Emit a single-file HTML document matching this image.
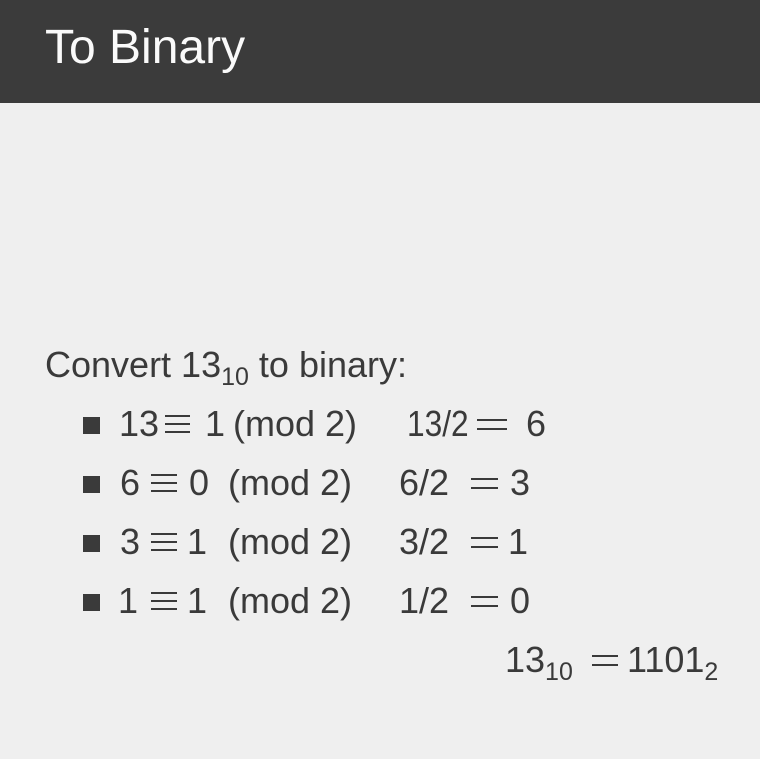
<!DOCTYPE html>
<html><head><meta charset="utf-8"><style>
body{margin:0;width:760px;height:759px;background:#efefef;position:relative;overflow:hidden;font-family:"Liberation Sans","DejaVu Sans",sans-serif;color:#3a3a3a}
.hd{position:absolute;left:0;top:0;width:760px;height:103px;background:#3b3b3b}
.t{position:absolute;left:45px;top:24px;font-size:48px;line-height:48px;color:#fafafa;white-space:nowrap}
.s{position:absolute;font-size:36px;line-height:36px;white-space:nowrap}
.l{position:absolute;height:2px;background:#3a3a3a}
sub{font-size:25px;vertical-align:-8px;line-height:0}
.b{position:absolute;left:83px;width:17px;height:17px;background:#3a3a3a}
</style></head><body>
<div class="hd"></div><div class="t">To Binary</div>
<div class="s" style="left:45px;top:347px">Convert 13<sub>10</sub> to binary:</div>

<div class="b" style="top:417px"></div>
<div class="s" style="left:119px;top:406px">13</div>
<div class="l" style="left:165px;width:25px;top:415px"></div>
<div class="l" style="left:165px;width:25px;top:423px"></div>
<div class="l" style="left:165px;width:25px;top:431px"></div>
<div class="s" style="left:205px;top:406px">1</div>
<div class="s" style="left:233px;top:406px">(mod 2)</div>
<div class="s" style="left:407px;top:406px;transform:scaleX(0.88);transform-origin:left center">13/2</div>
<div class="l" style="left:477px;width:30px;top:419px"></div>
<div class="l" style="left:477px;width:30px;top:428px"></div>
<div class="s" style="left:526px;top:406px">6</div>

<div class="b" style="top:476px"></div>
<div class="s" style="left:120px;top:465px">6</div>
<div class="l" style="left:151px;width:26px;top:474px"></div>
<div class="l" style="left:151px;width:26px;top:482px"></div>
<div class="l" style="left:151px;width:26px;top:490px"></div>
<div class="s" style="left:189px;top:465px">0</div>
<div class="s" style="left:228px;top:465px">(mod 2)</div>
<div class="s" style="left:399px;top:465px">6/2</div>
<div class="l" style="left:471px;width:27px;top:478px"></div>
<div class="l" style="left:471px;width:27px;top:487px"></div>
<div class="s" style="left:510px;top:465px">3</div>

<div class="b" style="top:535px"></div>
<div class="s" style="left:120px;top:524px">3</div>
<div class="l" style="left:151px;width:26px;top:533px"></div>
<div class="l" style="left:151px;width:26px;top:541px"></div>
<div class="l" style="left:151px;width:26px;top:549px"></div>
<div class="s" style="left:187px;top:524px">1</div>
<div class="s" style="left:228px;top:524px">(mod 2)</div>
<div class="s" style="left:399px;top:524px">3/2</div>
<div class="l" style="left:471px;width:27px;top:537px"></div>
<div class="l" style="left:471px;width:27px;top:546px"></div>
<div class="s" style="left:508px;top:524px">1</div>

<div class="b" style="top:594px"></div>
<div class="s" style="left:118px;top:583px">1</div>
<div class="l" style="left:151px;width:26px;top:592px"></div>
<div class="l" style="left:151px;width:26px;top:600px"></div>
<div class="l" style="left:151px;width:26px;top:608px"></div>
<div class="s" style="left:187px;top:583px">1</div>
<div class="s" style="left:228px;top:583px">(mod 2)</div>
<div class="s" style="left:399px;top:583px">1/2</div>
<div class="l" style="left:471px;width:27px;top:596px"></div>
<div class="l" style="left:471px;width:27px;top:605px"></div>
<div class="s" style="left:510px;top:583px">0</div>

<div class="s" style="left:505px;top:642px">13<sub>10</sub></div>
<div class="l" style="left:592px;width:26px;top:655px"></div>
<div class="l" style="left:592px;width:26px;top:664px"></div>
<div class="s" style="left:627px;top:642px">1101<sub>2</sub></div>
</body></html>
